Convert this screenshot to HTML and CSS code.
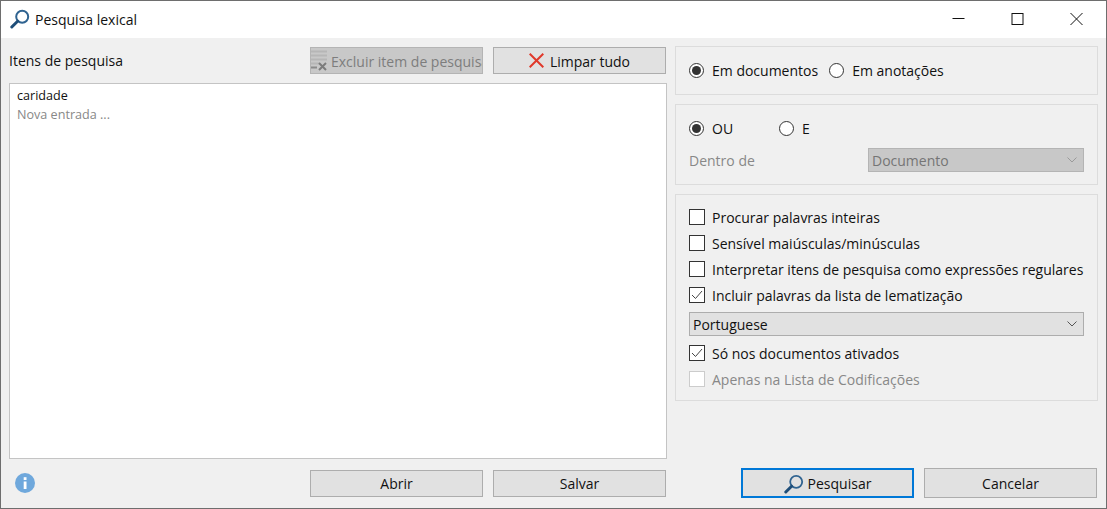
FILE: index.html
```html
<!DOCTYPE html>
<html lang="pt">
<head>
<meta charset="utf-8">
<title>Pesquisa lexical</title>
<link rel="stylesheet" href="styles.css">
</head>
<body>
<div class="window">
  <header class="titlebar">
    <svg class="title-icon" viewBox="0 0 20 20"><circle cx="12.2" cy="7.8" r="6" fill="none" stroke="#2f6390" stroke-width="2"/><path d="M7.6 12.2 1.8 18" stroke="#1f4e79" stroke-width="3" stroke-linecap="round"/></svg>
    <span class="title-text">Pesquisa lexical</span>
    <div class="win-controls">
      <svg class="win-btn" viewBox="0 0 59 37"><path d="M23.5 17.5h12" stroke="#111" fill="none"/></svg>
      <svg class="win-btn" viewBox="0 0 59 37"><rect x="24" y="12.5" width="11" height="11" stroke="#111" fill="none"/></svg>
      <svg class="win-btn" viewBox="0 0 59 37"><path d="M23.5 12l12 12M35.5 12l-12 12" stroke="#111" fill="none"/></svg>
    </div>
  </header>
  <main class="content">
    <section class="left">
      <div class="toolbar">
        <span class="toolbar-label">Itens de pesquisa</span>
        <button class="btn btn-disabled btn-low">
          <svg class="ex-icon" viewBox="0 0 20 24"><path d="M0 2.5h16M0 6.5h16M0 10.5h16M0 14.5h8" stroke="#b6b6b6" stroke-width="2"/><path d="M0 18.5h6" stroke="#8a8a8a" stroke-width="2"/><path d="M8 14l7 7M15 14l-7 7" stroke="#7c7c7c" stroke-width="2"/></svg>
          <span class="clip">Excluir item de pesquisa</span>
        </button>
        <button class="btn btn-low">
          <svg class="x-icon" viewBox="0 0 15 15"><path d="M.7.7l13.6 13.6M14.3.7.7 14.3" stroke="#e0392b" stroke-width="2"/></svg>
          Limpar tudo
        </button>
      </div>
      <div class="list">
        <div class="list-item">caridade</div>
        <div class="list-item muted">Nova entrada ...</div>
      </div>
      <div class="left-footer">
        <svg class="info" viewBox="0 0 20 20"><circle cx="10" cy="10" r="10" fill="#6fa8dc"/><rect x="8.7" y="8.5" width="2.8" height="7.5" fill="#fff"/><rect x="8.7" y="4.2" width="2.8" height="2.8" fill="#fff"/></svg>
        <button class="btn">Abrir</button>
        <button class="btn">Salvar</button>
      </div>
    </section>
    <section class="right">
      <div class="group group-scope">
        <label class="opt opt-scope"><span class="radio on"></span>Em documentos</label>
        <label class="opt"><span class="radio"></span>Em anotações</label>
      </div>
      <div class="group group-logic">
        <div class="logic-row">
          <label class="opt opt-or"><span class="radio on"></span>OU</label>
          <label class="opt"><span class="radio"></span>E</label>
        </div>
        <div class="within-row">
          <span class="muted">Dentro de</span>
          <div class="select select-disabled"><span class="muted-dark">Documento</span><svg class="chev" viewBox="0 0 10 6"><path d="M.5.5 5 5 9.500.5" fill="none" stroke="#9a9a9a"/></svg></div>
        </div>
      </div>
      <div class="group group-checks">
        <label class="check-row"><span class="check"></span>Procurar palavras inteiras</label>
        <label class="check-row"><span class="check"></span>Sensível maiúsculas/minúsculas</label>
        <label class="check-row"><span class="check"></span>Interpretar itens de pesquisa como expressões regulares</label>
        <label class="check-row"><span class="check"><svg viewBox="0 0 14 14"><path d="M2 7l3.500 3.500L12 3" fill="none" stroke="#444"/></svg></span>Incluir palavras da lista de lematização</label>
        <div class="select"><span>Portuguese</span><svg class="chev" viewBox="0 0 10 6"><path d="M.5.5 5 5 9.500.5" fill="none" stroke="#555"/></svg></div>
        <label class="check-row"><span class="check"><svg viewBox="0 0 14 14"><path d="M2 7l3.500 3.500L12 3" fill="none" stroke="#444"/></svg></span>Só nos documentos ativados</label>
        <label class="check-row muted"><span class="check check-disabled"></span>Apenas na Lista de Codificações</label>
      </div>
      <div class="right-footer">
        <button class="btn btn-primary btn-low">
          <svg class="search-icon" viewBox="0 0 20 20"><circle cx="12.2" cy="7.8" r="6" fill="none" stroke="#2f6390" stroke-width="1.8"/><path d="M7.6 12.2 1.8 18" stroke="#1f4e79" stroke-width="3" stroke-linecap="round"/></svg>
          Pesquisar
        </button>
        <button class="btn btn-tall btn-low">Cancelar</button>
      </div>
    </section>
  </main>
</div>
</body>
</html>
```
FILE: styles.css
```css
* { box-sizing: border-box; }
html, body { margin: 0; padding: 0; }
body {
  width: 1107px;
  height: 509px;
  overflow: hidden;
  font-family: "Open Sans", "Noto Sans", "Liberation Sans", sans-serif;
  font-size: 14px;
  color: #111;
}
.window {
  width: 1107px;
  height: 509px;
  display: flex;
  flex-direction: column;
  background: #f0f0f0;
  border: 1px solid #6e6e6e;
}
.titlebar {
  height: 37px;
  flex: none;
  display: flex;
  align-items: center;
  background: #fff;
  padding-left: 9px;
}
.title-icon { width: 20px; height: 20px; flex: none; margin-top: -2px; }
.title-text { margin-left: 5px; margin-top: -1px; }
.win-controls { margin-left: auto; display: flex; }
.win-btn { width: 59px; height: 37px; flex: none; }
.content {
  flex: 1;
  display: flex;
  gap: 8px;
  padding: 8px 8px 10px 8px;
  min-height: 0;
}
.left { width: 658px; flex: none; display: flex; flex-direction: column; }
.toolbar { display: flex; align-items: center; height: 27px; gap: 10px; padding-right: 1px; margin-top: 1px; }
.toolbar-label { margin-right: auto; margin-top: -1px; }
.btn {
  width: 173px;
  height: 27px;
  flex: none;
  display: inline-flex;
  align-items: center;
  justify-content: center;
  background: #e1e1e1;
  border: 1px solid #adadad;
  font: inherit;
  color: #111;
  padding: 0;
}
.btn-low { padding-top: 1px; }
.btn-disabled { background: #c8c8c8; border-color: #b4b4b4; color: #7d7d7d; justify-content: flex-start; overflow: hidden; }
.ex-icon { width: 20px; height: 24px; flex: none; }
.clip { white-space: nowrap; overflow: hidden; flex: 1; text-align: left; }
.x-icon { width: 15px; height: 15px; margin-right: 6px; margin-top: -2px; }
.list {
  flex: 1;
  margin-top: 9px;
  background: #fff;
  border: 1px solid #c4c4c4;
  padding: 2px 7px;
  min-height: 0;
}
.list-item { height: 19px; line-height: 19px; font-size: 12.6px; }
.muted { color: #888; }
.muted-dark { color: #757575; }
.left-footer { display: flex; align-items: center; gap: 10px; height: 26px; margin-top: 11px; padding-right: 1px; margin-bottom: 2px; }
.info { width: 20px; height: 20px; flex: none; margin-left: 6px; margin-right: auto; }
.right { flex: 1; display: flex; flex-direction: column; gap: 9px; min-width: 0; }
.group { border: 1px solid #dcdcdc; padding: 0 13px; }
.group-scope { height: 49px; display: flex; align-items: center; }
.opt { display: inline-flex; align-items: center; }
.opt-scope { margin-right: 11px; }
.radio {
  width: 15px; height: 15px; border-radius: 50%;
  border: 1px solid #333; background: #fff;
  margin-right: 8px; flex: none; position: relative;
}
.radio.on::after {
  content: ""; position: absolute; inset: 2px; border-radius: 50%; background: #333;
}
.group-logic { height: 81px; display: flex; flex-direction: column; padding-top: 11px; }
.logic-row { display: flex; height: 24px; align-items: center; }
.opt-or { width: 90px; }
.within-row { display: flex; align-items: center; justify-content: space-between; margin-top: 8px; }
.select {
  height: 24px; display: flex; align-items: center; justify-content: space-between;
  background: #e1e1e1; border: 1px solid #adadad; padding: 0 6px 0 3px;
}
.select-disabled { width: 216px; background: #c8c8c8; border-color: #b4b4b4; }
.chev { width: 10px; height: 6px; flex: none; }
.group-checks { height: 207px; padding-top: 9px; display: flex; flex-direction: column; }
.check-row { height: 26px; display: flex; align-items: center; flex: none; white-space: nowrap; }
.check {
  width: 16px; height: 16px; border: 1px solid #333; background: #fff;
  margin-right: 7px; flex: none; display: block;
}
.check svg { display: block; width: 14px; height: 14px; }
.check-disabled { border-color: #ccc; }
.group-checks .select { margin: 4px 0; }
.right-footer { margin-top: auto; display: flex; justify-content: flex-end; gap: 10px; padding-right: 1px; }
.btn-primary { height: 30px; border: 2px solid #0078d7; }
.btn-tall { height: 30px; }
.search-icon { width: 20px; height: 20px; margin-right: 4px; }
```
